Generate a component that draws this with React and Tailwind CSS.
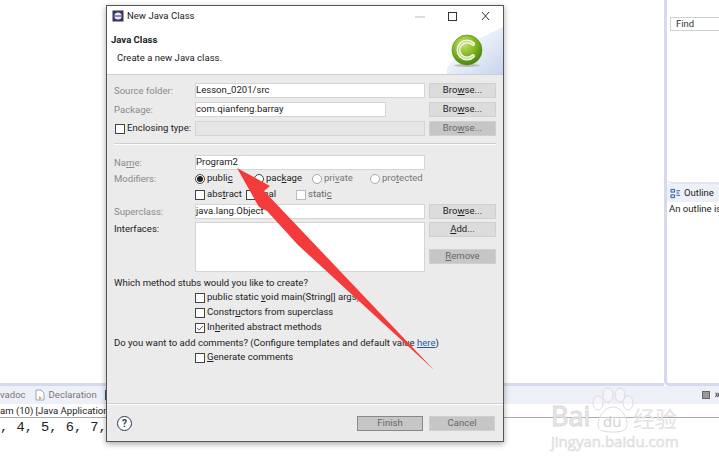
import React from 'react';

const font = "font-['Roboto','Noto_Sans',sans-serif]";

const Btn = ({ children, className = '', disabled }) => (
  <div
    className={`flex h-[15px] w-[67px] shrink-0 items-center justify-center border border-[#d0d0d0] text-[9.55px] ${
      disabled ? 'bg-[#c6c6c6] text-[#666]' : 'bg-[#dcdcdc] text-[#222]'
    } ${className}`}
  >
    {children}
  </div>
);

const Browse = () => <>Bro<u>w</u>se...</>;

const Input = ({ children, className = 'w-[230px]' }) => (
  <div className={`flex h-[15px] shrink-0 items-center border border-[#d4d4d4] bg-white text-[9.55px] text-[#222] ${className}`}>
    {children}
  </div>
);

const Check = ({ label, checked, faded }) => (
  <div className={`flex h-[15px] items-center gap-[2px] text-[9.55px] ${faded ? 'text-[#666]' : 'text-[#222]'}`}>
    <div className={`flex h-[10px] w-[10px] shrink-0 items-center justify-center border bg-white ${faded ? 'border-[#bbb]' : 'border-[#444]'}`}>
      {checked && (
        <svg viewBox="0 0 10 10" className="h-[8px] w-[8px]">
          <path d="M1.5 5l2.5 2.5 4.5-5" fill="none" stroke="#333" strokeWidth="1" />
        </svg>
      )}
    </div>
    <span>{label}</span>
  </div>
);

const Radio = ({ label, on, faded, className = '' }) => (
  <div className={`flex items-center gap-[2px] text-[9.55px] ${faded ? 'text-[#777]' : 'text-[#222]'} ${className}`}>
    <div className={`flex h-[10px] w-[10px] shrink-0 items-center justify-center rounded-full border bg-white ${faded ? 'border-[#aaa]' : 'border-[#444]'}`}>
      {on && <div className="h-[6px] w-[6px] rounded-full bg-[#222]" />}
    </div>
    <span>{label}</span>
  </div>
);

const Label = ({ children, dark }) => (
  <div className={`w-[81px] shrink-0 text-[9.55px] leading-[13px] ${dark ? 'text-[#222]' : 'text-[#8a8a8a]'}`}>{children}</div>
);

const ClassIcon = () => (
  <svg viewBox="0 0 32 34" className="h-[34px] w-[32px]">
    <defs>
      <radialGradient id="ball" cx="40%" cy="30%" r="75%">
        <stop offset="0%" stopColor="#c9e36a" />
        <stop offset="55%" stopColor="#7fb321" />
        <stop offset="100%" stopColor="#3f7d10" />
      </radialGradient>
    </defs>
    <ellipse cx="16" cy="31.5" rx="13" ry="1.5" fill="#bbb" />
    <circle cx="16" cy="16" r="15" fill="url(#ball)" stroke="#4c8a12" strokeWidth="0.6" />
    <path d="M22 10a8.5 8.5 0 1 0 0 12" fill="none" stroke="#f3f8e8" strokeWidth="4" strokeLinecap="round" />
    <path d="M22 10a8.5 8.5 0 1 0 0 12" fill="none" stroke="#a9cf62" strokeWidth="1" strokeLinecap="round" />
  </svg>
);

const Dialog = () => (
  <div className={`absolute left-[106px] top-[5px] flex h-[437px] w-[398px] flex-col border border-[#555] bg-[#ebebeb] shadow-[0_2px_6px_rgba(0,0,0,0.35)] ${font}`}>
    <div className="flex h-[20px] shrink-0 items-center bg-white pl-[5px] pr-[13px] text-[9.55px] text-[#222]">
      <svg viewBox="0 0 12 12" className="mr-[3px] h-[12px] w-[12px]">
        <rect x="0.5" y="0.5" width="11" height="11" fill="#3a3560" />
        <circle cx="6" cy="6" r="3.6" fill="#e8e8f0" />
        <path d="M2.5 6h7" stroke="#3a3560" strokeWidth="1" />
      </svg>
      New Java Class
      <svg viewBox="0 0 75 12" className="ml-auto h-[12px] w-[75px]">
        <path d="M0 7h10" stroke="#bbb" strokeWidth="1" />
        <rect x="33.5" y="2.5" width="8" height="8" fill="none" stroke="#333" strokeWidth="1" />
        <path d="M67 2l7 8M74 2l-7 8" stroke="#333" strokeWidth="1" />
      </svg>
    </div>

    <div className="relative flex h-[48px] shrink-0 flex-col bg-white pl-[4px] pt-[7px]">
      <div className="text-[9.55px] font-bold leading-[13px] text-[#222]">Java Class</div>
      <div className="mt-[5px] pl-[6px] text-[9.55px] leading-[13px] text-[#222]">Create a new Java class.</div>
      <div className="absolute bottom-0 right-0 h-[47px] w-[56px] bg-gradient-to-br from-white via-[#e8eef8] to-[#c6d4ec] [clip-path:polygon(100%_0,100%_100%,0_100%,0_85%,40%_35%)]" />
      <div className="absolute right-[20px] top-[8px]">
        <ClassIcon />
      </div>
    </div>

    <div className="h-[1px] shrink-0 bg-[#cfcfcf]" />

    <div className="flex flex-1 flex-col px-[7px] pt-[8px]">
      <div className="flex h-[15px] items-center">
        <Label>Source folder:</Label>
        <Input>Lesson_0201/src</Input>
        <Btn className="ml-[4px]"><Browse /></Btn>
      </div>
      <div className="mt-[4px] flex h-[15px] items-center">
        <Label>Package:</Label>
        <Input className="w-[191px]">com.qianfeng.barray</Input>
        <Btn className="ml-[43px]"><Browse /></Btn>
      </div>
      <div className="mt-[4px] flex h-[15px] items-center">
        <div className="w-[81px] shrink-0 pl-[1px]"><Check label="Enclosing type:" /></div>
        <Input className="w-[230px] !bg-[#e6e6e6]" />
        <Btn disabled className="ml-[4px]"><Browse /></Btn>
      </div>

      <div className="mt-[7px] h-[2px] border-y border-t-[#cfcfcf] border-b-white" />

      <div className="mt-[10px] flex h-[15px] items-center">
        <Label>Na<u>m</u>e:</Label>
        <Input>Program2</Input>
      </div>
      <div className="mt-[1px] flex h-[15px] items-center">
        <Label>Modifiers:</Label>
        <Radio label={<>publi<u>c</u></>} on className="w-[59px]" />
        <Radio label={<>pac<u>k</u>age</>} className="w-[58px]" />
        <Radio label={<>pri<u>v</u>ate</>} faded className="w-[58px]" />
        <Radio label={<>pro<u>t</u>ected</>} faded />
      </div>
      <div className="mt-[1px] flex h-[15px] items-center">
        <div className="w-[81px] shrink-0" />
        <div className="w-[51px]"><Check label={<>abs<u>t</u>ract</>} /></div>
        <div className="w-[50px]"><Check label="final" /></div>
        <Check label={<>stati<u>c</u></>} faded />
      </div>
      <div className="mt-[2px] flex h-[15px] items-center">
        <Label>Superclass:</Label>
        <Input>java.lang.Object</Input>
        <Btn className="ml-[4px]"><Browse /></Btn>
      </div>
      <div className="mt-[3px] flex h-[50px]">
        <Label dark>Interfaces:</Label>
        <div className="h-[50px] w-[230px] shrink-0 border border-[#d4d4d4] bg-white" />
        <div className="ml-[4px] flex flex-col gap-[12px]">
          <Btn><u>A</u>dd...</Btn>
          <Btn disabled><u>R</u>emove</Btn>
        </div>
      </div>

      <div className="mt-[3px] h-[15px] text-[9.55px] leading-[15px] text-[#222]">Which method stubs would you like to create?</div>
      <div className="flex flex-col pl-[81px]">
        <Check label={<>public static <u>v</u>oid main(String[] args)</>} />
        <Check label={<>Constr<u>u</u>ctors from superclass</>} />
        <Check label={<>In<u>h</u>erited abstract methods</>} checked />
      </div>
      <div className="h-[15px] text-[9.55px] leading-[15px] text-[#222]">
        Do you want to add comments? (Configure templates and default value <span className="text-[#1a5fa8] underline">here</span>)
      </div>
      <div className="pl-[81px]">
        <Check label={<><u>G</u>enerate comments</>} />
      </div>
    </div>

    <div className="h-[2px] shrink-0 border-y border-t-[#cfcfcf] border-b-white" />
    <div className="flex h-[36px] shrink-0 items-center pl-[10px] pr-[8px]">
      <div className="flex h-[15px] w-[15px] items-center justify-center rounded-full border border-[#2c3a55] bg-white text-[10px] font-bold text-[#2c3a55]">?</div>
      <Btn disabled className="ml-auto !border-[#888] !w-[66px]">Finish</Btn>
      <Btn disabled className="ml-[6px] !w-[66px]">Cancel</Btn>
    </div>
  </div>
);

const Watermark = () => (
  <div className="pointer-events-none absolute left-[551px] top-[386px] h-[64px] w-[132px] font-['Open_Sans',sans-serif] text-[#ececec]">
    <svg viewBox="0 0 132 64" className="absolute left-0 top-0 h-[64px] w-[132px]">
      <g fill="#fff" fillOpacity="0.35" stroke="#dcdcdc" strokeWidth="1">
        <ellipse cx="47" cy="17" rx="5" ry="7" />
        <ellipse cx="57" cy="9" rx="5" ry="7" />
        <ellipse cx="69" cy="9" rx="5" ry="7" />
        <ellipse cx="77" cy="17" rx="5" ry="7" />
        <path d="M62 21c8 0 14 9 14 18 0 6-6 7-14 7s-15-1-15-7c0-9 7-18 15-18z" />
      </g>
    </svg>
    <div className="absolute left-0 top-[14px] text-[27px] leading-[32px] [-webkit-text-stroke:1px_#d8d8d8]">Bai</div>
    <div className="absolute left-[52px] top-[26px] text-[15px] leading-[18px] text-[#d0d0d0]">du</div>
    <div className="absolute left-[82px] top-[18px] font-['Noto_Sans_CJK_SC',sans-serif] text-[22px] leading-[26px] text-[#e2e2e2]">经验</div>
    <div className="absolute left-0 top-[46px] whitespace-nowrap text-[15px] leading-[18px] [-webkit-text-stroke:0.5px_#d8d8d8]">jingyan.baidu.com</div>
  </div>
);

const App = () => (
  <div className={`relative flex h-[466px] w-[719px] flex-col overflow-hidden bg-white ${font}`}>
    <div className="flex h-[386px] shrink-0">
      <div className="flex-1 border-b-[3px] border-[#d5daec]" />
      <div className="flex w-[55px] shrink-0 flex-col rounded-bl-[5px] border-b-[3px] border-l-[3px] border-[#d5daec]">
        <div className="flex h-[184px] shrink-0 flex-col rounded-bl-[5px] border-b-[2px] border-[#e3e6f2] pl-[3px] pt-[17px]">
          <div className="flex h-[14px] items-center border border-[#d0d0d0] border-r-0 pl-[5px] text-[9.55px] text-[#333]">Find</div>
        </div>
        <div className="flex h-[18px] shrink-0 items-center gap-[3px] bg-[#eef0f8] pl-[3px] text-[9.55px] text-[#222]">
          <svg viewBox="0 0 12 12" className="h-[11px] w-[11px]">
            <path d="M1 1.5h4v3H1zM1 7.5h4v3H1z" fill="#cfe0f5" stroke="#27549b" />
            <path d="M7 3h4M7 5.5h3M7 8h4" stroke="#27549b" />
          </svg>
          Outline
        </div>
        <div className="whitespace-nowrap pl-[2px] text-[9.55px] text-[#222]">An outline is</div>
      </div>
    </div>

    <div className="flex h-[18px] shrink-0 items-center bg-[#eef0f8] text-[9.55px] text-[#777]">
      <span>vadoc</span>
      <svg viewBox="0 0 12 12" className="ml-[8px] mr-[3px] h-[12px] w-[12px]">
        <path d="M2 1h5l3 3v7H2z" fill="#fff" stroke="#8fa5c4" />
        <path d="M5 7l3 2-3 2z" fill="#e0a93c" />
      </svg>
      <span>Declaration</span>
      <div className="ml-[8px] h-[10px] w-[10px] border border-[#27549b] bg-[#cfe0f5]" />
      <div className="ml-auto flex items-center bg-[#f6f6fa] px-[1px]">
        <div className="h-[8px] w-[8px] border border-[#666] bg-[#999]" />
      </div>
      <span className="ml-[4px] mr-[-1px] text-[11px] font-bold leading-[12px] text-[#333]">»</span>
    </div>
    <div className="h-[13px] shrink-0 whitespace-nowrap text-[9.55px] leading-[14px] text-[#222]">am (10) [Java Application]</div>
    <div className="h-[1px] shrink-0 bg-[#aaa]" />
    <div className="whitespace-pre pt-[1px] font-['Liberation_Mono',monospace] text-[13.7px] leading-[18px] text-[#222]">, 4, 5, 6, 7,</div>

    <Dialog />

    <svg viewBox="0 0 719 466" className="pointer-events-none absolute left-0 top-0 h-[466px] w-[719px]">
      <path d="M237 168 L270 186 L264 191 L434 370 L298 245 L267 211 L259 207 Z" fill="#f33b3b" />
    </svg>

    <Watermark />
  </div>
);

export default App;
